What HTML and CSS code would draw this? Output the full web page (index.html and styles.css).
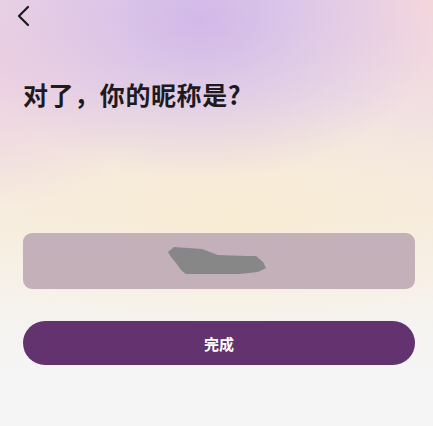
FILE: index.html
```html
<!DOCTYPE html>
<html lang="zh">
<head>
<meta charset="utf-8">
<link rel="stylesheet" href="styles.css">
</head>
<body>
<div class="page">
  <div class="topbar">
    <svg class="back" width="14" height="22" viewBox="0 0 14 22"><path d="M12 2 L3 11 L12 20" fill="none" stroke="#1c1c1c" stroke-width="2.2" stroke-linecap="round" stroke-linejoin="round"/></svg>
  </div>
  <h1 class="title">对了，你的昵称是?</h1>
  <div class="field">
    <svg class="redact" width="104" height="32" viewBox="0 0 104 32"><path d="M2 7 L8 2 L22 3 L36 4 L52 10 L80 11 L90 11 L97 17 L100 23 L92 27 L74 29 L20 29 L15 25 L10 18 L5 12 Z" fill="#878787"/></svg>
  </div>
  <button class="done">完成</button>
</div>
</body>
</html>
```
FILE: styles.css
```css
html, body {
  margin: 0;
  padding: 0;
}
body {
  width: 433px;
  height: 426px;
  overflow: hidden;
  font-family: "Noto Sans CJK SC", "Noto Sans", sans-serif;
  background:
    radial-gradient(ellipse 240px 160px at 200px 20px, rgba(208,182,232,0.95), rgba(208,182,232,0.5) 45%, rgba(208,182,232,0) 100%),
    radial-gradient(ellipse 160px 140px at 433px 0px, rgba(246,214,218,0.9), rgba(246,214,218,0) 100%),
    radial-gradient(ellipse 160px 150px at 0px 60px, rgba(238,208,224,0.9), rgba(238,208,224,0) 100%),
    radial-gradient(ellipse 300px 120px at 230px 210px, rgba(249,236,212,0.9), rgba(249,236,212,0) 100%),
    linear-gradient(to bottom, #eadaea 0px, #f1e3e2 120px, #f6ede0 210px, #f6f2ec 300px, #f5f5f5 370px);
}
.page {
  padding: 0 18px 0 23px;
  display: flex;
  flex-direction: column;
}
.topbar {
  height: 34px;
  display: flex;
  align-items: flex-start;
  padding-top: 5px;
  margin-left: -7px;
  box-sizing: border-box;
}
.back {
  display: block;
}
.title {
  margin: 42px 0 0 0;
  font-size: 25px;
  line-height: 36px;
  font-weight: 700;
  color: #1e1a1e;
  letter-spacing: 0.6px;
}
.field {
  margin-top: 121px;
  height: 56px;
  border-radius: 9px;
  background: #c4b0b8;
  display: flex;
  align-items: center;
  justify-content: center;
}
.redact {
  display: block;
  margin-left: -2px;
}
.done {
  margin-top: 32px;
  height: 44px;
  border: none;
  border-radius: 22px;
  background: #62336f;
  color: #ffffff;
  font-family: "Noto Sans CJK SC", "Noto Sans", sans-serif;
  font-size: 15px;
  font-weight: 700;
  padding: 0;
}
```
